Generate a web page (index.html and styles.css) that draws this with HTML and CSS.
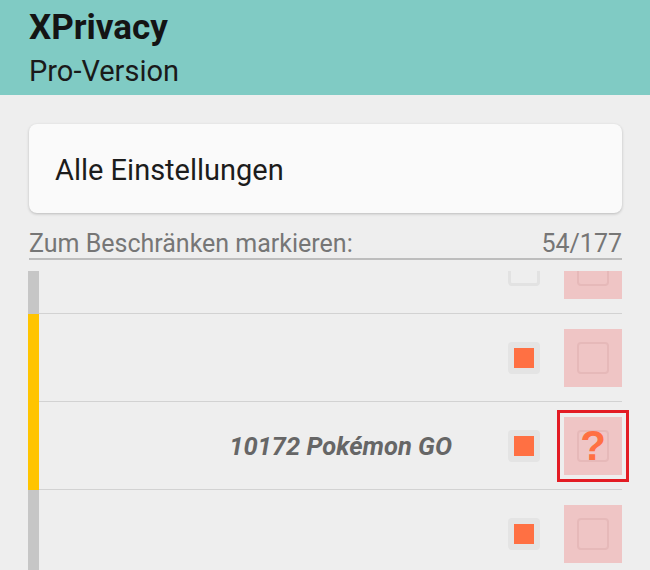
FILE: index.html
```html
<!DOCTYPE html>
<html lang="de">
<head>
<meta charset="utf-8">
<title>XPrivacy</title>
<link rel="stylesheet" href="styles.css">
</head>
<body>
<div class="app">
  <header class="appbar">
    <h1 class="title">XPrivacy</h1>
    <div class="subtitle">Pro-Version</div>
  </header>
  <main class="content">
    <div class="card">Alle Einstellungen</div>
    <div class="summary">
      <span>Zum Beschränken markieren:</span>
      <span>54/177</span>
    </div>
    <div class="list">
      <div class="list-inner">
        <div class="row">
          <div class="bar bar-gray"></div>
          <div class="row-body">
            <span class="check check-off"></span>
            <span class="restrict"><span class="restrict-box"></span></span>
          </div>
        </div>
        <div class="row">
          <div class="bar bar-yellow"></div>
          <div class="row-body">
            <span class="check check-on"><span class="check-fill"></span></span>
            <span class="restrict"><span class="restrict-box"></span></span>
          </div>
        </div>
        <div class="row">
          <div class="bar bar-yellow"></div>
          <div class="row-body">
            <span class="app-name">10172 Pokémon GO</span>
            <span class="check check-on"><span class="check-fill"></span></span>
            <span class="restrict restrict-marked"><span class="restrict-box"></span><span class="qmark">?</span></span>
          </div>
        </div>
        <div class="row">
          <div class="bar bar-gray"></div>
          <div class="row-body">
            <span class="check check-on"><span class="check-fill"></span></span>
            <span class="restrict"><span class="restrict-box"></span></span>
          </div>
        </div>
      </div>
    </div>
  </main>
</div>
</body>
</html>
```

FILE: styles.css
```css
* { box-sizing: border-box; }
html, body { margin: 0; padding: 0; }
body {
  background: #eeeeee;
  font-family: Roboto, "Noto Sans", Arial, sans-serif;
  width: 650px;
  height: 570px;
  overflow: hidden;
}
.app {
  height: 570px;
  display: flex;
  flex-direction: column;
}
.appbar {
  background: #80cbc4;
  padding: 8px 29px 8px 29px;
  height: 95px;
}
.title {
  margin: 0;
  font-size: 35px;
  line-height: 40px;
  font-weight: 700;
  color: #141414;
}
.subtitle {
  margin-top: 7px;
  font-size: 29px;
  line-height: 32px;
  color: #1a1a1a;
}
.content {
  flex: 1;
  min-height: 0;
  display: flex;
  flex-direction: column;
  padding: 29px 28px 0 29px;
}
.card {
  height: 89px;
  background: #fafafa;
  border-radius: 8px;
  box-shadow: 0 1px 3px rgba(0,0,0,0.22);
  padding: 30px 26px 0 26px;
  font-size: 29px;
  line-height: 32px;
  color: #1c1c1c;
}
.summary {
  margin-top: 17px;
  display: flex;
  justify-content: space-between;
  font-size: 25px;
  line-height: 28px;
  color: #767676;
  border-bottom: 2px solid #bdbdbd;
}
.list {
  margin-top: 11px;
  flex: 1;
  min-height: 0;
  overflow: hidden;
  margin-left: -1px;
  margin-right: -28px;
  padding-right: 28px;
}
.list-inner {
  margin-top: -45px;
}
.row {
  display: flex;
  height: 88px;
}
.bar {
  width: 11px;
  flex: none;
}
.bar-gray { background: #c6c6c6; }
.bar-yellow { background: #ffc400; }
.row-body {
  flex: 1;
  display: flex;
  align-items: center;
  justify-content: flex-end;
  border-bottom: 1px solid #d2d2d2;
}
.app-name {
  font-size: 25.5px;
  font-weight: 700;
  font-style: italic;
  color: #666666;
  margin-right: 56px;
}
.check {
  width: 32px;
  height: 32px;
  border-radius: 4px;
  display: flex;
  align-items: center;
  justify-content: center;
  margin-right: 24px;
}
.check-off {
  border: 3px solid #e2e2e2;
}
.check-on {
  background: #e4e4e4;
}
.check-fill {
  width: 20px;
  height: 20px;
  background: #ff7043;
}
.restrict {
  position: relative;
  width: 58px;
  height: 58px;
  background: #efc5c5;
  display: flex;
  align-items: center;
  justify-content: center;
}
.restrict-box {
  width: 32px;
  height: 32px;
  border: 2px solid #e6b9b9;
  border-radius: 4px;
}
.restrict-marked {
  outline: 3px solid #e31b23;
  outline-offset: 4px;
}
.qmark {
  position: absolute;
  left: 0;
  right: 0;
  top: 0;
  bottom: 0;
  display: flex;
  align-items: center;
  justify-content: center;
  font-family: "Liberation Sans", Arial, sans-serif;
  font-weight: 700;
  font-size: 42px;
  color: #ff7043;
}
```
